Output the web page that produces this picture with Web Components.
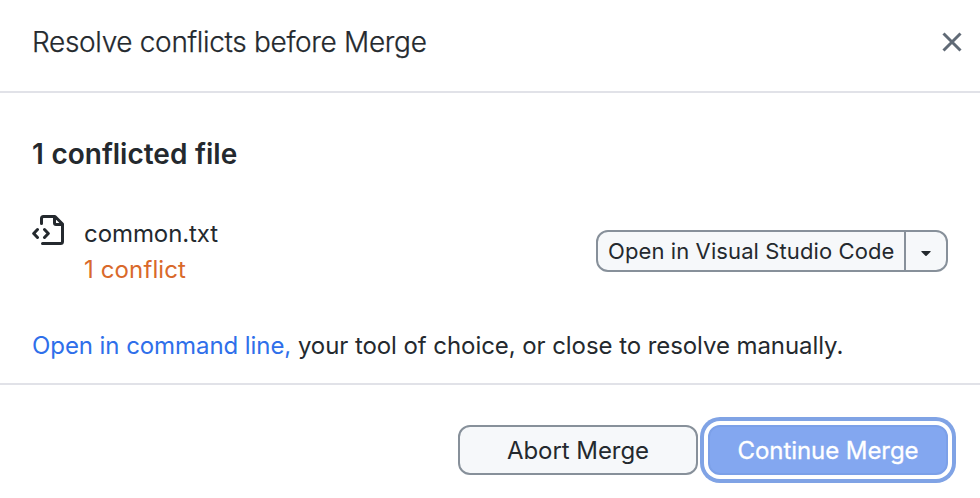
<!DOCTYPE html>
<html lang="en"><head><meta charset="utf-8"><title>Resolve conflicts before Merge</title>
<style>
body{margin:0;background:#fff;color:#24292e;font:24px/36px Inter,"Liberation Sans",sans-serif;overflow:hidden}
</style></head><body>
<merge-dialog></merge-dialog>
<script>
const define=(name,html)=>customElements.define(name,class extends HTMLElement{
  constructor(){super();this.attachShadow({mode:'open'}).innerHTML=html;}
});
define('dialog-header',`<style>
:host{display:flex;box-sizing:border-box;height:93px;padding:0 18px 8px 32px;align-items:center;justify-content:space-between;border-bottom:2px solid #e1e2e8}
h1{margin:0;font-size:28px;font-weight:300;letter-spacing:-.33px;white-space:nowrap;-webkit-text-stroke:.25px #24292e}
svg{display:block}
</style><h1><slot></slot></h1>
<svg width="20" height="20" viewBox="0 0 20 20" fill="none" stroke="#606a76" stroke-width="3"><path d="M1.5 1.5l17 17m0-17l-17 17"/></svg>`);
define('conflict-file',`<style>
:host{display:flex;height:72px}
.icon{width:52px;flex:none}
svg{display:block}
.text{flex:1;white-space:nowrap;padding-top:1px;letter-spacing:-.08px}
.status{color:#d9692b;letter-spacing:.12px}
</style><div class="icon"><svg width="34" height="34" viewBox="0 0 34 34" fill="none" stroke="#24292e" stroke-width="3" stroke-linejoin="round" stroke-linecap="round">
<path d="M9.5 8.5V3.5a2 2 0 0 1 2-2H23l7.5 7.5V26.5a2 2 0 0 1-2 2H10.5M22.500 2v6a1.500 1.500 0 0 0 1.500 1.500h6M5.500 14.500L1.700 18.500l3.800 4M12.500 14.500l3.800 4-3.800 4"/></svg></div>
<div class="text"><div><slot></slot></div><div class="status"><slot name="status"></slot></div></div><slot name="action"></slot>`);
define('split-button',`<style>
:host{display:flex;box-sizing:border-box;width:352px;height:42px;border:2px solid #87909a;border-radius:12px;background:#f6f8fa;overflow:hidden;font-size:22px;line-height:38px;letter-spacing:.1px}
.label{box-sizing:border-box;width:306px;padding-left:10px;white-space:nowrap}
.arrow{flex:1;display:flex;align-items:center;justify-content:center;border-left:2px solid #87909a;padding-top:6px;box-sizing:border-box}
</style><div class="label"><slot></slot></div><div class="arrow"><svg width="10" height="6" viewBox="0 0 10 6"><path fill="#24292e" d="M.8 0h8.400q.8 0 .4.800L5.600 4.700q-.6.600-1.200 0L.4.800Q0 0 .8 0z"/></svg></div>`);
define('dialog-button',`<style>
:host{display:block;box-sizing:border-box;width:240px;height:50px;border:2px solid #87909a;border-radius:12px;background:#f6f8fa;text-align:center;line-height:47px;white-space:nowrap;letter-spacing:-.06px}
:host([primary]){color:#fff;background:#83a7f0;border-color:#7ca0e8;box-shadow:0 0 0 4px #fff,0 0 0 8px #80a3e5;-webkit-text-stroke:.3px #fff}
</style><slot></slot>`);
define('merge-dialog',`<style>
:host{display:block;height:498px}
main{box-sizing:border-box;height:292px;padding:43px 32px 0;border-bottom:2px solid #e1e2e8}
h2{margin:0;font-size:28px;line-height:36px;font-weight:600;white-space:nowrap;word-spacing:.5px}
conflict-file{margin-top:43px}
split-button{margin-top:15px}
p{margin:41px 0 0;white-space:nowrap;letter-spacing:-.07px}
a{color:#2f6fea}
footer{display:flex;justify-content:flex-end;gap:10px;padding:40px 32px 0}
</style>
<dialog-header>Resolve conflicts before Merge</dialog-header>
<main><h2>1 conflicted file</h2>
<conflict-file>common.txt<span slot="status">1 conflict</span><split-button slot="action">Open in Visual Studio Code</split-button></conflict-file>
<p><a>Open in command line,</a> your tool of choice, or close to resolve manually.</p></main>
<footer><dialog-button>Abort Merge</dialog-button><dialog-button primary>Continue Merge</dialog-button></footer>`);
</script></body></html>
